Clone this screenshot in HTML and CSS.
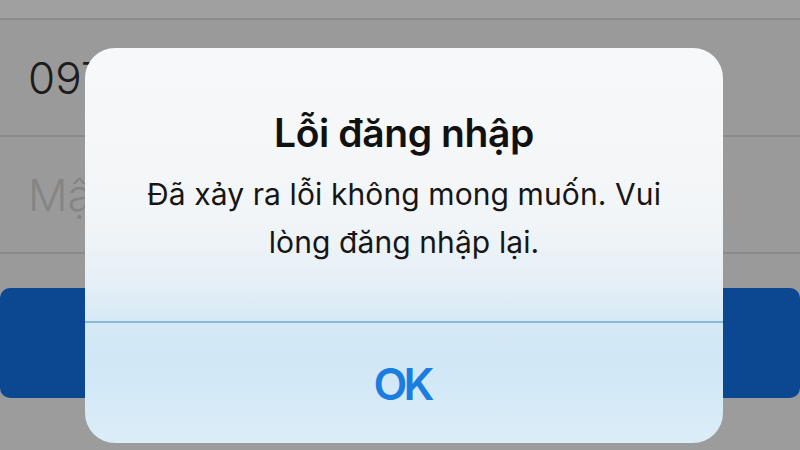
FILE: index.html
```html
<!DOCTYPE html>
<html lang="vi">
<head>
<meta charset="utf-8">
<title>Lỗi đăng nhập</title>
<link rel="stylesheet" href="styles.css">
</head>
<body>
<div class="screen">
  <div class="form">
    <div class="field"><span class="value">097</span></div>
    <div class="field"><span class="placeholder">Mật khẩu</span></div>
    <div class="login-btn"></div>
  </div>
  <div class="alert" role="alertdialog">
    <div class="alert-body">
      <h1 class="alert-title">Lỗi đăng nhập</h1>
      <p class="alert-msg">Đã xảy ra lỗi không mong muốn. Vui<br>lòng đăng nhập lại.</p>
    </div>
    <div class="alert-actions">
      <button class="alert-btn">OK</button>
    </div>
  </div>
</div>
</body>
</html>
```
FILE: styles.css
```css
html, body {
  margin: 0;
  padding: 0;
}
body {
  width: 800px;
  height: 450px;
  overflow: hidden;
  background: #9c9c9c;
  font-family: Inter, "Noto Sans", sans-serif;
}
.screen {
  position: relative;
  width: 800px;
  height: 450px;
}
.form {
  display: flex;
  flex-direction: column;
  padding-top: 18px;
  background: linear-gradient(180deg, #a0a0a0 0, #a0a0a0 18px, #9a9a9a 18px);
}
.field {
  height: 115px;
  border-top: 2px solid #8b8b8b;
  display: flex;
  align-items: center;
  padding-left: 28px;
  font-size: 44px;
  line-height: 1;
  font-weight: 300;
}
.field:nth-child(2) {
  border-bottom: 2px solid #8b8b8b;
}
.value {
  color: #1c1c1c;
}
.placeholder {
  color: #858585;
}
.login-btn {
  margin-top: 34px;
  height: 110px;
  background: #0c4892;
  border-radius: 10px;
}
.alert {
  position: absolute;
  left: 85px;
  top: 48px;
  width: 638px;
  height: 395px;
  border-radius: 30px;
  overflow: hidden;
  display: flex;
  flex-direction: column;
  background: linear-gradient(180deg, #f7f8f9 0%, #f3f6f8 40%, #e6eff6 60%, #d6e9f5 69%, #d0e7f6 80%, #dbedf8 100%);
}
.alert-body {
  height: 275px;
  border-bottom: 2px solid #88b7d7;
  padding-top: 61px;
  box-sizing: border-box;
  text-align: center;
}
.alert-title {
  margin: 0;
  font-size: 39px;
  line-height: 48px;
  font-weight: 600;
  letter-spacing: -0.4px;
  color: #111;
}
.alert-msg {
  margin: 13px 0 0;
  font-size: 30px;
  line-height: 48px;
  letter-spacing: 0.1px;
  color: #161616;
}
.alert-actions {
  flex: 1;
  display: flex;
  align-items: center;
  justify-content: center;
}
.alert-btn {
  border: 0;
  background: transparent;
  font-family: Inter, "Noto Sans", sans-serif;
  font-size: 44px;
  font-weight: 600;
  letter-spacing: -4px;
  color: #1b7de0;
  padding: 0 4px 0 0;
  margin-top: 2px;
}
```
